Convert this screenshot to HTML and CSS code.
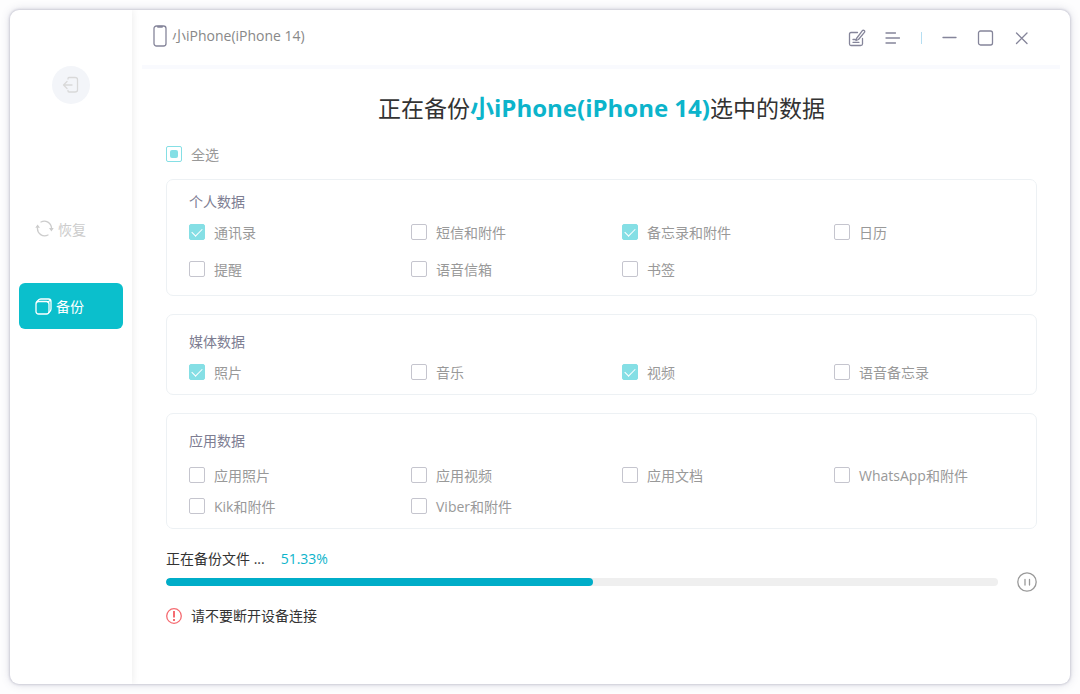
FILE: index.html
```html
<!DOCTYPE html>
<html lang="zh-CN">
<head>
    <meta charset="UTF-8">
    <meta name="viewport" content="width=device-width, initial-scale=1.0">
    <title>备份</title>
    <link rel="stylesheet" href="styles.css">
</head>
<body>
    <div class="window">
        <aside class="sidebar">
            <button class="back" aria-label="返回">
                <svg width="18" height="18" viewBox="0 0 18 18"><path d="M6 3V2.500Q6 1.500 7 1.500H13Q15.500 1.500 15.500 3.500V14Q15.500 16 13 16H7Q6 16 6 15V14.500M10 9H1.500M5 5.500L1.500 9L5 12.500"/></svg>
            </button>
            <nav class="nav">
                <button class="nav-item disabled">
                    <svg width="19" height="18" viewBox="0 0 19 18"><path d="M6 2A7.200 7.200 0 0 1 16.500 8M13 15A7.200 7.200 0 0 1 2.500 8"/><path d="M.3 7.800L2.600 4.500L5 7.800ZM14 8L16.400 11.500L18.700 8Z" class="solid"/></svg>
                    <span>恢复</span>
                </button>
                <button class="nav-item active">
                    <svg width="17" height="17" viewBox="0 0 17 17"><rect x="1" y="3.500" width="13" height="12.500" rx="2.500"/><path d="M2 3.500L4 1.500Q5 1 6 1H13.500Q16 1 16 3.500V11Q16 13 14 14.500M13 4L15.500 2"/></svg>
                    <span>备份</span>
                </button>
            </nav>
        </aside>

        <main class="main">
            <header class="header">
                <div class="device">
                    <svg width="14" height="22" viewBox="0 0 14 22"><rect x="1" y="1" width="12" height="20" rx="2.500"/><path d="M5 1.800H9" stroke-width="2"/></svg>
                    <span>小iPhone(iPhone 14)</span>
                </div>
                <div class="tools">
                    <button aria-label="反馈"><svg width="18" height="18" viewBox="0 0 18 18"><path d="M9.500 3.500H3Q1.500 3.500 1.500 5V15Q1.500 16.500 3 16.500H12.500Q14.500 16.500 14.500 15V9.500M8.500 9.500L14.200 1.800Q15.200 .8 16.200 1.600Q17.200 2.400 16.400 3.400L10.500 10.500L8 11.500ZM5 10.500H7M5 13.300H11"/></svg></button>
                    <button aria-label="菜单"><svg width="18" height="18" viewBox="0 0 18 18"><path d="M2 4H11.500M2 9H15.500M2 14H11.500"/></svg></button>
                    <span class="divider"></span>
                    <button aria-label="最小化"><svg width="18" height="18" viewBox="0 0 18 18"><path d="M2 8.500H15"/></svg></button>
                    <button aria-label="最大化"><svg width="18" height="18" viewBox="0 0 18 18"><rect x="1.500" y="2" width="14" height="14" rx="2"/></svg></button>
                    <button aria-label="关闭"><svg width="18" height="18" viewBox="0 0 18 18"><path d="M3.500 4L14 14.500M14 4L3.500 14.500"/></svg></button>
                </div>
            </header>

            <div class="content">
                <h1 class="title">正在备份<b>小iPhone(iPhone 14)</b>选中的数据</h1>

                <label class="check all"><input type="checkbox" id="all"><span>全选</span></label>

                <section class="panel personal">
                    <h2>个人数据</h2>
                    <div class="options">
                        <label class="check"><input type="checkbox" checked><span>通讯录</span></label>
                        <label class="check"><input type="checkbox"><span>短信和附件</span></label>
                        <label class="check"><input type="checkbox" checked><span>备忘录和附件</span></label>
                        <label class="check"><input type="checkbox"><span>日历</span></label>
                        <label class="check"><input type="checkbox"><span>提醒</span></label>
                        <label class="check"><input type="checkbox"><span>语音信箱</span></label>
                        <label class="check"><input type="checkbox"><span>书签</span></label>
                    </div>
                </section>

                <section class="panel media">
                    <h2>媒体数据</h2>
                    <div class="options">
                        <label class="check"><input type="checkbox" checked><span>照片</span></label>
                        <label class="check"><input type="checkbox"><span>音乐</span></label>
                        <label class="check"><input type="checkbox" checked><span>视频</span></label>
                        <label class="check"><input type="checkbox"><span>语音备忘录</span></label>
                    </div>
                </section>

                <section class="panel apps">
                    <h2>应用数据</h2>
                    <div class="options">
                        <label class="check"><input type="checkbox"><span>应用照片</span></label>
                        <label class="check"><input type="checkbox"><span>应用视频</span></label>
                        <label class="check"><input type="checkbox"><span>应用文档</span></label>
                        <label class="check"><input type="checkbox"><span>WhatsApp和附件</span></label>
                        <label class="check"><input type="checkbox"><span>Kik和附件</span></label>
                        <label class="check"><input type="checkbox"><span>Viber和附件</span></label>
                    </div>
                </section>

                <div class="status">
                    <label for="progress">正在备份文件 ...</label>
                    <span class="percent">51.33%</span>
                </div>
                <div class="progress-row">
                    <progress id="progress" value="51.33" max="100"></progress>
                    <button class="pause" aria-label="暂停">
                        <svg width="20" height="20" viewBox="0 0 20 20"><circle cx="10" cy="10" r="9.200"/><path d="M8 7.500V13M12.500 7.500V13"/></svg>
                    </button>
                </div>
                <p class="warning">
                    <svg width="16" height="16" viewBox="0 0 16 16"><circle cx="8" cy="8" r="7.300"/><path d="M7 3H9V9.500H7ZM7 11H9V13H7Z" class="solid"/></svg>
                    <span>请不要断开设备连接</span>
                </p>
            </div>
        </main>
    </div>

    <script>
        // only some of the items are selected
        document.getElementById("all").indeterminate = true;
    </script>
</body>
</html>
```
FILE: styles.css
```css
* {
    box-sizing: border-box;
}
body {
    margin: 0;
    padding: 10px;
    min-height: 100vh;
    display: flex;
    background: #fdfdfe;
    font-family: "Open Sans", "Noto Sans CJK SC", sans-serif;
    font-size: 14px;
    line-height: 20px;
    color: #333;
}
button {
    padding: 0;
    border: none;
    background: none;
    font: inherit;
    cursor: pointer;
}
svg {
    display: block;
    flex: none;
    fill: none;
    stroke: currentColor;
    stroke-width: 1.3;
    stroke-linecap: round;
    stroke-linejoin: round;
}
.window {
    flex: 1;
    display: flex;
    background: #fff;
    border-radius: 9px;
    box-shadow: 0 0 2px 1px #d0d0da, 0 0 9px rgba(90, 90, 130, 0.25);
    overflow: hidden;
}

/* sidebar */
.sidebar {
    width: 122px;
    flex: none;
    padding: 56px 9px 0;
    box-shadow: 1px 0 7px rgba(0, 0, 0, 0.07);
}
.back {
    display: flex;
    align-items: center;
    justify-content: center;
    width: 38px;
    height: 38px;
    margin: 0 auto 102px;
    border-radius: 50%;
    background: #f3f5f9;
    color: #d9d9d9;
}
.nav {
    display: flex;
    flex-direction: column;
    gap: 31px;
}
.nav-item {
    display: flex;
    align-items: center;
    gap: 4px;
    height: 46px;
    padding: 0 16px;
    border-radius: 6px;
}
.nav-item span,
.check span {
    padding-top: 2px;
    line-height: 18px;
}
.disabled {
    color: #ccc;
}
.active {
    background: #0bbfcc;
    color: #fff;
}
.solid {
    fill: currentColor;
    stroke: none;
}

/* top bar */
.main {
    flex: 1;
    min-width: 0;
}
.header {
    display: flex;
    align-items: center;
    justify-content: space-between;
    height: 59px;
    margin: 0 10px;
    padding: 0 20px 0 11px;
    border-bottom: 4px solid #f9fafe;
}
.device {
    display: flex;
    align-items: center;
    gap: 5px;
    height: 24px;
    margin-bottom: 4px;
    color: #888;
}
.device svg {
    color: #85859a;
}
.tools {
    display: flex;
    align-items: center;
    color: #85859a;
}
.tools button {
    width: 36px;
    height: 36px;
    display: flex;
    align-items: center;
    justify-content: center;
    color: inherit;
}
.divider {
    width: 1px;
    height: 12px;
    margin: 0 10px;
    background: #b5def2;
}

/* content */
.content {
    padding: 21px 33px 21px 34px;
}
.title {
    margin: 0 0 18px;
    font-size: 23px;
    line-height: 36px;
    font-weight: 400;
    text-align: center;
}
.title b {
    font-size: 24px;
    color: #0cb4cb;
}
.check {
    display: flex;
    align-items: center;
    gap: 9px;
    color: #999;
}
.check input {
    appearance: none;
    flex: none;
    display: grid;
    place-items: center;
    width: 16px;
    height: 16px;
    margin: 0;
    border: 1px solid #c5c5ce;
    border-radius: 2px;
    background: #fff;
}
.check input:checked {
    border-color: #85dfe5;
    background: #85dfe5;
}
.check input:checked::before {
    content: "";
    width: 9px;
    height: 5px;
    margin-bottom: 3px;
    border: solid #fff;
    border-width: 0 0 1px 1px;
    transform: rotate(-45deg);
}
.check input:indeterminate {
    border-color: #85dfe5;
}
.check input:indeterminate::before {
    content: "";
    width: 8px;
    height: 8px;
    border-radius: 2px;
    background: #85dfe5;
}
.all {
    width: fit-content;
    margin-bottom: 15px;
}
.panel {
    padding: 17px 22px 12px;
    margin-bottom: 18px;
    border: 1px solid #edf1f4;
    border-radius: 7px;
}
.panel h2 {
    margin: 0 0 10px;
    font-size: 14px;
    line-height: 20px;
    font-weight: 400;
    color: #7d7d92;
}
.options {
    display: grid;
    grid-template-columns: 222fr 211fr 212fr 180fr;
    row-gap: 11px;
}
.personal {
    padding: 12px 22px 16px;
}
.personal .options {
    row-gap: 17px;
}
.apps h2 {
    margin-bottom: 14px;
}

/* progress */
.status {
    display: flex;
    gap: 16px;
    margin-top: 20px;
}
.percent {
    color: #0cb4cb;
}
.progress-row {
    display: flex;
    align-items: center;
    gap: 19px;
    margin-top: 3px;
}
progress {
    appearance: none;
    flex: 1;
    min-width: 0;
    height: 8px;
    border: none;
    border-radius: 4px;
    background: #efefef;
    overflow: hidden;
}
progress::-webkit-progress-bar {
    background: #efefef;
}
progress::-webkit-progress-value {
    border-radius: 4px;
    background: #00adc8;
}
.pause {
    color: #999;
}
.warning {
    display: flex;
    align-items: center;
    gap: 9px;
    margin: 14px 0 0;
}
.warning svg {
    color: #f56c72;
}
```
